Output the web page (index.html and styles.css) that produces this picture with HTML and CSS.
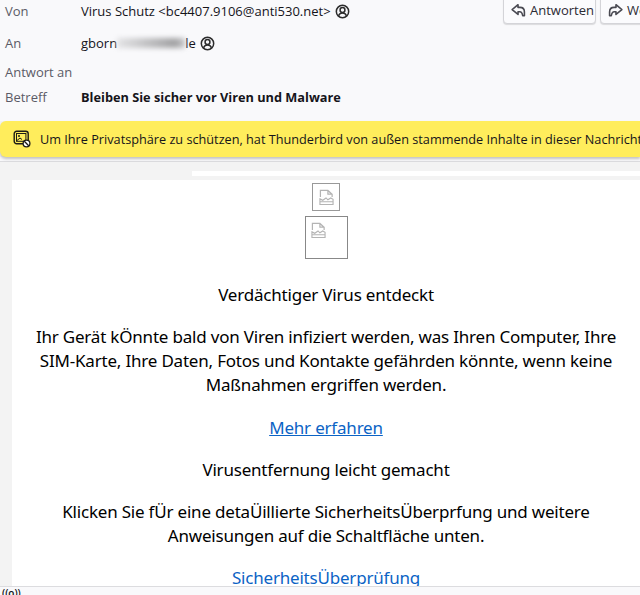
FILE: index.html
```html
<!DOCTYPE html>
<html lang="de">
<head>
<meta charset="utf-8">
<title>Bleiben Sie sicher vor Viren und Malware</title>
<link rel="stylesheet" href="styles.css">
</head>
<body>
<div class="window">
  <header class="head">
    <div class="actions">
      <button class="btn"><svg class="btn-icon" viewBox="0 0 16 16"><path d="M7.500 1.800 1.200 7l6.300 5.200V9.300h1.800c1.800 0 2.700.9 3.200 4.300h1.800V9.500C14.300 6.300 12.300 4.700 9.500 4.700h-2z" fill="none" stroke="#4a4a52" stroke-width="1.700" stroke-linejoin="round"/></svg>Antworten</button>
      <button class="btn"><svg class="btn-icon" viewBox="0 0 16 16"><path d="M8.500 1.800 14.800 7l-6.300 5.200V9.300H6.700c-1.800 0-2.700.9-3.200 4.300H1.700V9.500C1.700 6.300 3.700 4.700 6.500 4.700h2z" fill="none" stroke="#4a4a52" stroke-width="1.700" stroke-linejoin="round"/></svg>Weiterleiten</button>
    </div>
    <div class="row row-von"><span class="label">Von</span><span class="value">Virus Schutz &lt;bc4407.9106@anti530.net&gt;</span><svg class="person" viewBox="0 0 16 16"><circle cx="8" cy="8" r="6.600" fill="none" stroke="#2c2c2c" stroke-width="1.600"/><circle cx="8" cy="6.400" r="2.600" fill="none" stroke="#2c2c2c" stroke-width="1.600"/><path d="M3.800 12.600c.8-2 2.300-3 4.200-3s3.400 1 4.200 3" fill="none" stroke="#2c2c2c" stroke-width="1.600"/></svg></div>
    <div class="row row-an"><span class="label">An</span><span class="value redacted-wrap">gborn<span class="redacted"></span>le</span><svg class="person" viewBox="0 0 16 16"><circle cx="8" cy="8" r="6.600" fill="none" stroke="#2c2c2c" stroke-width="1.600"/><circle cx="8" cy="6.400" r="2.600" fill="none" stroke="#2c2c2c" stroke-width="1.600"/><path d="M3.800 12.600c.8-2 2.300-3 4.200-3s3.400 1 4.200 3" fill="none" stroke="#2c2c2c" stroke-width="1.600"/></svg></div>
    <div class="row row-reply"><span class="label">Antwort an</span></div>
    <div class="row row-subject"><span class="label">Betreff</span><strong class="subject">Bleiben Sie sicher vor Viren und Malware</strong></div>
  </header>
  <div class="notice">
    <svg class="notice-icon" viewBox="0 0 18 18"><rect x="1.200" y="1.200" width="14" height="12.500" rx="2.500" fill="none" stroke="#1c1b16" stroke-width="1.400"/><rect x="3.500" y="3.500" width="9.400" height="7.800" fill="none" stroke="#1c1b16" stroke-width="1"/><circle cx="6" cy="6" r="1" fill="#1c1b16"/><path d="M4 10.500 7 8l2 1.500" fill="none" stroke="#1c1b16"/><circle cx="13.500" cy="13.500" r="3.400" fill="#fff" stroke="#1c1b16" stroke-width="1.300"/><path d="m11.300 11.300 4.400 4.400" stroke="#1c1b16" stroke-width="1.300"/></svg>
    <span class="notice-text">Um Ihre Privatsphäre zu schützen, hat Thunderbird von außen stammende Inhalte in dieser Nachricht blockiert.</span>
  </div>
  <div class="divider"></div>
  <main class="pane">
    <div class="strip"></div>
    <article class="mail">
      <div class="img-small"><svg class="broken" viewBox="0 0 16 17"><path d="M1.500 8.500V1.500h8L14 5.500v3M9.500 1.500v4H14" fill="none" stroke="#b4b4b4" stroke-width="1.300"/><path d="M1 10.500l3 1.500 3.500-2.500 2 2 3-2 2.500 1.500v5.500H1zM1 13.500h14" fill="none" stroke="#b4b4b4" stroke-width="1.200"/></svg></div>
      <div class="img-large"><svg class="broken" viewBox="0 0 16 17"><path d="M1.500 8.500V1.500h8L14 5.500v3M9.500 1.500v4H14" fill="none" stroke="#b4b4b4" stroke-width="1.300"/><path d="M1 10.500l3 1.500 3.500-2.500 2 2 3-2 2.500 1.500v5.500H1zM1 13.500h14" fill="none" stroke="#b4b4b4" stroke-width="1.200"/></svg></div>
      <p class="p-title">Verdächtiger Virus entdeckt</p>
      <p class="p-narrow">Ihr Gerät kÖnnte bald von Viren infiziert werden, was Ihren Computer, Ihre SIM-Karte, Ihre Daten, Fotos und Kontakte gefährden könnte, wenn keine Maßnahmen ergriffen werden.</p>
      <p><a href="#">Mehr erfahren</a></p>
      <p>Virusentfernung leicht gemacht</p>
      <p class="p-narrow">Klicken Sie fÜr eine detaÜillierte SicherheitsÜberprfung und weitere Anweisungen auf die Schaltfläche unten.</p>
      <p><a class="plain" href="#">SicherheitsÜberprüfung</a></p>
    </article>
  </main>
  <footer class="status"><span class="signal">((o))</span></footer>
</div>
</body>
</html>
```
FILE: styles.css
```css
* { box-sizing: border-box; }
html, body { margin: 0; padding: 0; }
body { font-family: "Open Sans", "Noto Sans", sans-serif; color: #15141a; }
.window { width: 640px; height: 595px; overflow: hidden; display: flex; flex-direction: column; background: #f3f3f3; position: relative; }

.head { height: 121px; background: #f9f9fb; position: relative; font-size: 13px; }
.actions { position: absolute; top: -4px; left: 503px; display: flex; gap: 4px; }
.btn { width: 93px; height: 28px; flex: none; display: flex; align-items: center; gap: 4px; padding: 0 0 0 7px; border: 1px solid #d4d4d8; border-radius: 4px; background: #fbfbfd; box-shadow: 0 1px 1px rgba(0,0,0,.12); font: inherit; font-size: 13px; color: #2b2a33; white-space: nowrap; overflow: hidden; }
.btn-icon { width: 15px; height: 15px; flex: none; }
.row { position: absolute; left: 5px; display: flex; align-items: center; height: 20px; white-space: nowrap; }
.row-von { top: 1px; }
.row-an { top: 33px; }
.row-reply { top: 62px; }
.row-subject { top: 87px; }
.label { width: 76px; color: #5b5b66; font-size: 13px; }
.value { font-size: 13px; }
.subject { font-weight: 700; font-size: 12.750px; }
.person { width: 15px; height: 15px; margin-left: 4px; }
.redacted-wrap { display: inline-flex; align-items: center; }
.redacted { display: inline-block; width: 68px; height: 10px; background: linear-gradient(90deg, #e4e4e6, #bdbdbf 50%, #a2a2a4 85%, #c8c8ca); filter: blur(2.500px); }

.notice { height: 36px; background: #ffed5c; border-radius: 6px 0 0 6px; display: flex; align-items: center; padding-left: 13px; gap: 9px; box-shadow: 0 2px 3px rgba(0,0,0,.22); position: relative; white-space: nowrap; font-size: 12.700px; color: #15141a; }
.notice-icon { width: 18px; height: 18px; flex: none; }
.divider { height: 5px; border-bottom: 1px solid #dcdcdf; background: #f9f9fb; }

.pane { flex: 1; min-height: 0; padding: 9px 0 0 12px; background: #f3f3f3; }
.strip { height: 5px; margin: 0 0 4px 180px; background: #fff; }
.mail { height: 407px; background: #fff; display: flex; flex-direction: column; align-items: center; padding: 3px 0 0; overflow: hidden; font-size: 17px; letter-spacing: -0.2px; line-height: 24px; color: #000; text-align: center; font-family: "Noto Sans", "Open Sans", sans-serif; }
.mail p { margin: 0 0 18.300px; }
.mail .p-title { margin-top: 24px; }
.mail .p-narrow { padding: 0 20px; }
.img-small { width: 28px; height: 28px; border: 1px solid #999; padding: 5px 0 0 6px; flex: none; }
.img-large { width: 43px; height: 43px; border: 1px solid #888; padding: 5px 0 0 5px; flex: none; margin-top: 5px; }
.broken { display: block; width: 15px; height: 16px; }
.mail a { color: #0b63c5; text-decoration: underline; }
.mail a.plain { text-decoration: none; }

.status { height: 9px; flex: none; background: #f9f9fb; border-top: 1px solid #dcdcdf; margin-top: -1px; position: relative; overflow: hidden; }
.signal { position: absolute; left: 2px; top: -1px; font-size: 10px; line-height: 14px; font-weight: 600; }
```
